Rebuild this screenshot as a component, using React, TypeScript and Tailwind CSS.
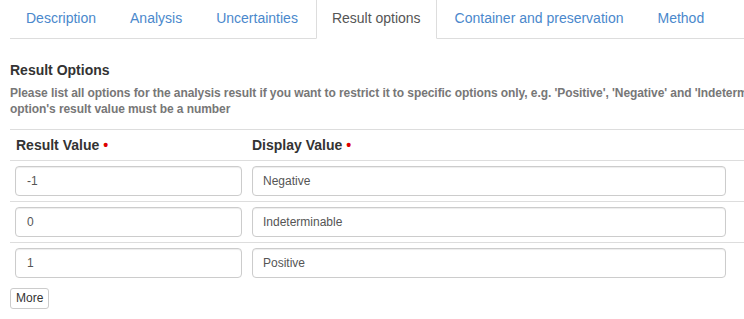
const tabs = [
  "Description",
  "Analysis",
  "Uncertainties",
  "Result options",
  "Container and preservation",
  "Method",
];

const rows = [
  { value: "-1", display: "Negative" },
  { value: "0", display: "Indeterminable" },
  { value: "1", display: "Positive" },
];

export default function App() {
  return (
    <div className="w-[744px] h-[319px] overflow-hidden bg-white font-['Liberation_Sans',Arial,sans-serif]">
      <div className="w-[900px] pl-[10px]">
        {/* tabs */}
        <ul className="-mt-[3px] flex border-b border-[#ddd]">
          {tabs.map((t) => {
            const active = t === "Result options";
            return (
              <li key={t} className="mr-[2px] -mb-px">
                <a
                  href="#"
                  className={
                    active
                      ? "block rounded-t-[4px] border border-[#ddd] border-b-white bg-white px-[15px] py-[10px] text-[14px] leading-5 text-[#555]"
                      : "block rounded-t-[4px] border border-transparent px-[15px] py-[10px] text-[14px] leading-5 text-[#4a88cc]"
                  }
                >
                  {t}
                </a>
              </li>
            );
          })}
        </ul>

        <h3 className="mt-[21px] text-[14px] leading-5 font-bold text-[#333]">
          Result Options
        </h3>
        <p className="mt-[5px] text-[12px] leading-4 font-bold tracking-[-0.07px] text-[#777]">
          <span className="block whitespace-nowrap">
            Please list all options for the analysis result if you want to
            restrict it to specific options only, e.g. 'Positive', 'Negative'
            and 'Indeterminable'. The
          </span>
          <span className="block whitespace-nowrap">
            option's result value must be a number
          </span>
        </p>

        {/* options table */}
        <div className="mt-[12px] border-t border-[#ddd]">
          <div className="flex border-b border-[#ddd] text-[14px] leading-5 font-bold text-[#333]">
            <div className="w-[237px] px-[6px] py-[5px]">
              Result Value <span className="text-[#d00]">•</span>
            </div>
            <div className="w-[484px] px-[5px] py-[5px]">
              Display Value <span className="text-[#d00]">•</span>
            </div>
          </div>
          {rows.map((r, i) => (
            <div
              key={r.value}
              className={
                i < rows.length - 1
                  ? "flex border-b border-[#ddd]"
                  : "flex"
              }
            >
              <div className="w-[237px] p-[5px]">
                <input
                  defaultValue={r.value}
                  className="h-[30px] w-full rounded-[4px] border border-[#ccc] px-[11px] text-[12px] text-[#555] shadow-[inset_0_1px_1px_rgba(0,0,0,0.075)] outline-none"
                />
              </div>
              <div className="w-[484px] p-[5px]">
                <input
                  defaultValue={r.display}
                  className="h-[30px] w-full rounded-[4px] border border-[#ccc] px-[10px] text-[12px] text-[#555] shadow-[inset_0_1px_1px_rgba(0,0,0,0.075)] outline-none"
                />
              </div>
            </div>
          ))}
        </div>

        <button className="mt-[5px] rounded-[3px] border border-[#ccc] bg-white px-[5px] py-px text-[12px] leading-[17px] text-[#333]">
          More
        </button>
      </div>
    </div>
  );
}
